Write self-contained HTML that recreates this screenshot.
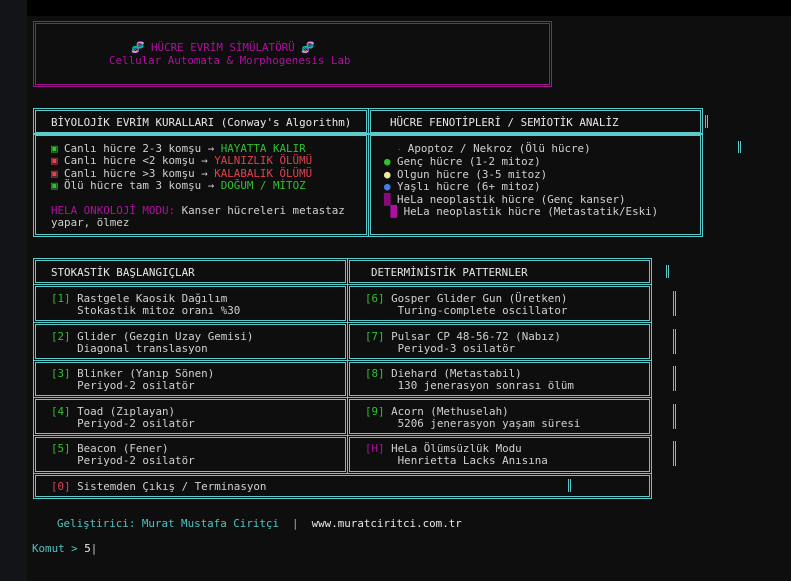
<!DOCTYPE html>
<html><head><meta charset="utf-8">
<style>
*{margin:0;padding:0;box-sizing:border-box}
html,body{width:791px;height:581px;overflow:hidden;background:#0e0e0e}
body{position:relative;font-family:"DejaVu Sans Mono","Liberation Mono",monospace;font-size:10.85px;color:#d0d0d0}
.strip{position:absolute;left:0;top:0;width:27px;height:581px;background:#131417}
.top{position:absolute;left:27px;top:0;width:764px;height:16px;background:#000}
.b{position:absolute;border:3px double #5ccaca}
.m{position:absolute;border:3px double #a0148f}
.t{position:absolute;white-space:pre;line-height:12.4px;margin-top:2px}
.vb{position:absolute;width:3px;border-left:1px solid #5ccaca;border-right:1px solid #5ccaca}
.g{color:#2ec22e}.r{color:#e0424f}.p{color:#b0109f}.c{color:#4fc3c3}.w{color:#e8e8e8}
</style></head><body>
<div class="strip"></div><div class="top"></div>

<div class="m" style="left:33px;top:21px;width:519px;height:66px"></div>
<div class="t p" style="left:131px;top:40px">🧬 HÜCRE EVRİM SİMÜLATÖRÜ 🧬</div>
<div class="t p" style="left:109px;top:53px">Cellular Automata &amp; Morphogenesis Lab</div>

<div class="b" style="left:33px;top:108px;width:336px;height:27px"></div>
<div class="b" style="left:33px;top:133px;width:336px;height:104px"></div>
<div class="b" style="left:368px;top:108px;width:335px;height:27px"></div>
<div class="b" style="left:368px;top:133px;width:335px;height:104px"></div>
<div class="vb" style="left:705px;top:115px;height:13px"></div>
<div class="vb" style="left:738px;top:141px;height:12px"></div>
<div class="t w" style="left:51px;top:115px">BİYOLOJİK EVRİM KURALLARI (Conway's Algorithm)</div>
<div class="t w" style="left:390px;top:115px">HÜCRE FENOTİPLERİ / SEMİOTİK ANALİZ</div>
<div class="t" style="left:51px;top:141px"><span class="g">▣</span> Canlı hücre 2-3 komşu → <span class="g">HAYATTA KALIR</span>
<span class="r">▣</span> Canlı hücre &lt;2 komşu → <span class="r">YALNIZLIK ÖLÜMÜ</span>
<span class="r">▣</span> Canlı hücre &gt;3 komşu → <span class="r">KALABALIK ÖLÜMÜ</span>
<span class="g">▣</span> Ölü hücre tam 3 komşu → <span class="g">DOĞUM / MİTOZ</span>

<span class="p">HELA ONKOLOJİ MODU:</span> Kanser hücreleri metastaz
yapar, ölmez</div>
<div class="t" style="left:384px;top:141px">  <span class="r" style="font-size:7px">·</span> Apoptoz / Nekroz (Ölü hücre)
<span style="color:#2ec22e">●</span> Genç hücre (1-2 mitoz)
<span style="color:#f4e9a0">●</span> Olgun hücre (3-5 mitoz)
<span style="color:#3f7fe8">●</span> Yaşlı hücre (6+ mitoz)
<span style="color:#8a0a7a">█</span> HeLa neoplastik hücre (Genç kanser)
 <span class="p">█</span> HeLa neoplastik hücre (Metastatik/Eski)</div>

<div class="b" style="left:33px;top:258px;width:315px;height:27px"></div>
<div class="b" style="left:347px;top:258px;width:305px;height:27px"></div>
<div class="vb" style="left:666px;top:265px;height:13px"></div>
<div class="t w" style="left:51px;top:265px">STOKASTİK BAŞLANGIÇLAR</div>
<div class="t w" style="left:371px;top:265px">DETERMİNİSTİK PATTERNLER</div>

<div class="b" style="left:33px;top:284px;width:315px;height:39px"></div>
<div class="b" style="left:347px;top:284px;width:305px;height:39px"></div>
<div class="b" style="left:33px;top:322px;width:315px;height:39px"></div>
<div class="b" style="left:347px;top:322px;width:305px;height:39px"></div>
<div class="b" style="left:33px;top:360px;width:315px;height:38px"></div>
<div class="b" style="left:347px;top:360px;width:305px;height:38px"></div>
<div class="b" style="left:33px;top:397px;width:315px;height:39px"></div>
<div class="b" style="left:347px;top:397px;width:305px;height:39px"></div>
<div class="b" style="left:33px;top:435px;width:315px;height:39px"></div>
<div class="b" style="left:347px;top:435px;width:305px;height:39px"></div>
<div class="b" style="left:33px;top:473px;width:619px;height:26px"></div>
<div class="vb" style="left:673px;top:291px;height:25px"></div>
<div class="vb" style="left:673px;top:329px;height:25px"></div>
<div class="vb" style="left:673px;top:366px;height:25px"></div>
<div class="vb" style="left:673px;top:404px;height:25px"></div>
<div class="vb" style="left:673px;top:441px;height:25px"></div>
<div class="vb" style="left:568px;top:479px;height:13px"></div>

<div class="t" style="left:51px;top:291px"><span class="g">[1]</span> Rastgele Kaosik Dağılım
    Stokastik mitoz oranı %30</div>
<div class="t" style="left:51px;top:329px"><span class="g">[2]</span> Glider (Gezgin Uzay Gemisi)
    Diagonal translasyon</div>
<div class="t" style="left:51px;top:366px"><span class="g">[3]</span> Blinker (Yanıp Sönen)
    Periyod-2 osilatör</div>
<div class="t" style="left:51px;top:404px"><span class="g">[4]</span> Toad (Zıplayan)
    Periyod-2 osilatör</div>
<div class="t" style="left:51px;top:441px"><span class="g">[5]</span> Beacon (Fener)
    Periyod-2 osilatör</div>
<div class="t" style="left:51px;top:479px"><span class="r">[0]</span> Sistemden Çıkış / Terminasyon</div>

<div class="t" style="left:365px;top:291px"><span class="g">[6]</span> Gosper Glider Gun (Üretken)
     Turing-complete oscillator</div>
<div class="t" style="left:365px;top:329px"><span class="g">[7]</span> Pulsar CP 48-56-72 (Nabız)
     Periyod-3 osilatör</div>
<div class="t" style="left:365px;top:366px"><span class="g">[8]</span> Diehard (Metastabil)
     130 jenerasyon sonrası ölüm</div>
<div class="t" style="left:365px;top:404px"><span class="g">[9]</span> Acorn (Methuselah)
     5206 jenerasyon yaşam süresi</div>
<div class="t" style="left:365px;top:441px"><span class="p">[H]</span> HeLa Ölümsüzlük Modu
     Henrietta Lacks Anısına</div>

<div class="t" style="left:57px;top:516px"><span class="c">Geliştirici: Murat Mustafa Ciritçi</span>  <span style="color:#aaa">|</span>  <span class="w">www.muratciritci.com.tr</span></div>
<div class="t" style="left:32px;top:541px"><span class="c">Komut &gt; </span><span class="w">5</span><span style="color:#ccc">|</span></div>
</body></html>
